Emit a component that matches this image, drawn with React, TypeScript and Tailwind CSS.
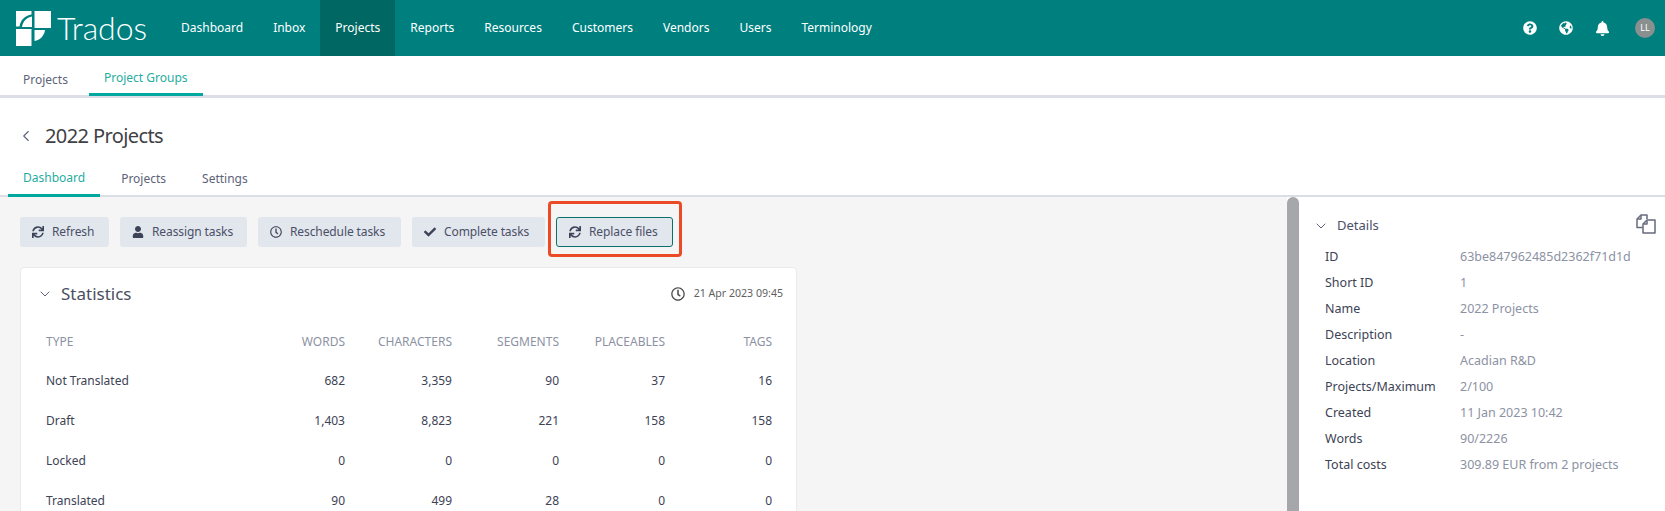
import { ChevronDown, ChevronLeft } from "lucide-react";
import { FaBell, FaCheck, FaGlobeAmericas, FaQuestionCircle, FaRegClock, FaSync, FaUser } from "react-icons/fa";

const navItems = ["Dashboard", "Inbox", "Projects", "Reports", "Resources", "Customers", "Vendors", "Users", "Terminology"];

const rows = [
  ["Not Translated", "682", "3,359", "90", "37", "16"],
  ["Draft", "1,403", "8,823", "221", "158", "158"],
  ["Locked", "0", "0", "0", "0", "0"],
  ["Translated", "90", "499", "28", "0", "0"],
];

const details = [
  ["ID", "63be847962485d2362f71d1d"],
  ["Short ID", "1"],
  ["Name", "2022 Projects"],
  ["Description", "-"],
  ["Location", "Acadian R&D"],
  ["Projects/Maximum", "2/100"],
  ["Created", "11 Jan 2023 10:42"],
  ["Words", "90/2226"],
  ["Total costs", "309.89 EUR from 2 projects"],
];

const Logo = () => (
  <svg width="35" height="35" viewBox="0 0 35 35" fill="#fff">
    <path d="M0 0h15.500v3.500C9 4.500 4.500 9 3.500 15.500H0z" />
    <path d="M6 16h10V5.500C10.500 6.500 7 10 6 16z" />
    <path d="M18.500 0H35v17H18.500z" />
    <path d="M0 18h15.500v17H0z" />
    <path d="M18.500 19H29c-.8 6-5 10-10.500 11z" />
  </svg>
);

const Action = ({ icon, label, w, active }: { icon: React.ReactNode; label: string; w: string; active?: boolean }) => (
  <button className={`${w} h-[30px] flex items-center pl-[11px] gap-[8px] rounded-[3px] bg-[#e2e6ed] text-[12px] tracking-[-0.1px] text-[#4a5068] ${active ? "border border-[#0b6f6b] pl-[10px]" : ""}`}>
    <span className="w-[13px] flex justify-center text-[#3c4359] text-[12px]">{icon}</span>
    {label}
  </button>
);

export default function App() {
  return (
    <div className="w-[1665px] h-[511px] overflow-hidden bg-white flex flex-col font-['Noto_Sans',sans-serif]">
      <header className="h-[56px] bg-[#007f7f] flex items-center shrink-0">
        <div className="flex items-center pl-[16px] w-[166px] gap-[6px]">
          <Logo />
          <span className="font-['Lato',sans-serif] font-light text-[32px] leading-none text-white">Trados</span>
        </div>
        <nav className="flex h-full text-[12px] text-white">
          {navItems.map((n) => (
            <a key={n} className={`h-full flex items-center px-[15px] ${n === "Projects" ? "bg-[#006763]" : ""}`}>{n}</a>
          ))}
        </nav>
        <div className="ml-auto flex items-center gap-[22px] pr-[10px] text-white text-[14px]">
          <FaQuestionCircle />
          <FaGlobeAmericas />
          <FaBell className="text-[15px]" />
          <div className="ml-[3px] w-[20px] h-[20px] rounded-full bg-[#8a8f8f] text-[9px] flex items-center justify-center">LL</div>
        </div>
      </header>

      <div className="h-[42px] shrink-0 border-b-[3px] border-[#dcdee6] flex text-[12px] px-[8px]">
        <a className="px-[15px] h-[40px] pt-[7px] flex items-center text-[#5d6479]">Projects</a>
        <a className="px-[15px] h-[40px] pt-[7px] flex items-center text-[#26ada0] border-b-[3px] border-[#00a89f] ml-[6px]">Project Groups</a>
      </div>

      <div className="h-[64px] shrink-0 flex items-center pl-[17px] gap-[10px] pt-[11px]">
        <ChevronLeft size={18} strokeWidth={1.5} className="text-[#5d6479]" />
        <h1 className="text-[20px] tracking-[-0.6px] text-[#3f3f46]">2022 Projects</h1>
      </div>

      <div className="h-[35px] shrink-0 border-b-[2px] border-[#dcdee6] flex text-[12px] px-[8px]">
        <a className="px-[15px] h-[35px] flex items-center text-[#26ada0] border-b-[3px] border-[#00a89f]">Dashboard</a>
        <a className="px-[15px] h-[33px] flex items-center text-[#5d6479] ml-[6px]">Projects</a>
        <a className="px-[15px] h-[33px] flex items-center text-[#5d6479] ml-[6px]">Settings</a>
      </div>

      <div className="flex flex-1 min-h-0">
        <main className="w-[1287px] bg-[#f5f5f5] px-[20px] pt-[20px]">
          <div className="flex items-center gap-[11px]">
            <Action icon={<FaSync />} label="Refresh" w="w-[89px]" />
            <Action icon={<FaUser />} label="Reassign tasks" w="w-[127px]" />
            <Action icon={<FaRegClock />} label="Reschedule tasks" w="w-[143px]" />
            <Action icon={<FaCheck />} label="Complete tasks" w="w-[133px]" />
            <div className="relative">
              <Action icon={<FaSync />} label="Replace files" w="w-[117px]" active />
              <div className="absolute -left-[8px] -right-[9px] -top-[16px] -bottom-[10px] border-[3px] border-[#ea4a26] rounded-[4px]" />
            </div>
          </div>

          <section className="w-[777px] mt-[20px] bg-white rounded-t-[4px] border border-[#e8eaee] pt-[15px]">
            <div className="flex items-center pl-[16px] pr-[13px] h-[22px]">
              <ChevronDown size={16} strokeWidth={1.5} className="text-[#5d6479]" />
              <span className="ml-[8px] text-[17px] text-[#4a4f60]">Statistics</span>
              <FaRegClock className="ml-auto text-[14px] text-[#4b4b4b]" />
              <span className="ml-[9px] text-[10.6px] text-[#5f5f5f]">21 Apr 2023 09:45</span>
            </div>
            <table className="w-[726px] ml-[25px] mt-[17px] text-[12px] text-[#3d4255]">
              <thead>
                <tr className="h-[39px] text-[#8c92a3] text-right">
                  <th className="font-normal text-left">TYPE</th>
                  <th className="font-normal w-[100px]">WORDS</th>
                  <th className="font-normal w-[107px]">CHARACTERS</th>
                  <th className="font-normal w-[107px]">SEGMENTS</th>
                  <th className="font-normal w-[106px]">PLACEABLES</th>
                  <th className="font-normal w-[107px]">TAGS</th>
                </tr>
              </thead>
              <tbody>
                {rows.map((r) => (
                  <tr key={r[0]} className="h-[40px] text-right">
                    <td className="text-left">{r[0]}</td>
                    {r.slice(1).map((c, i) => <td key={i}>{c}</td>)}
                  </tr>
                ))}
              </tbody>
            </table>
          </section>
        </main>

        <div className="w-[12px] bg-[#a5a7aa] rounded-t-[6px] shrink-0" />

        <aside className="flex-1 bg-white relative pt-[19px]">
          <div className="flex items-center pl-[14px] h-[20px]">
            <ChevronDown size={16} strokeWidth={1.5} className="text-[#5d6479]" />
            <span className="ml-[8px] text-[13px] text-[#4a4f6a]">Details</span>
            <svg className="absolute right-[9px] top-[17px]" width="20" height="20" viewBox="0 0 20 20" fill="none" stroke="#666b7e" strokeWidth="1.500" strokeLinejoin="round">
              <path d="M6.500 13.500H1V5l4-4h6v4" />
              <path d="M5 1.500V5H1.500" />
              <path d="M11 6h8v13H7v-9z" />
              <path d="M11 6.500V10H7.500" />
            </svg>
          </div>
          <dl className="mt-[8px] pl-[26px] text-[12.5px]">
            {details.map(([k, v]) => (
              <div key={k} className="flex h-[26px] items-center">
                <dt className="w-[135px] text-[#3d4255]">{k}</dt>
                <dd className="text-[#8c92a3]">{v}</dd>
              </div>
            ))}
          </dl>
        </aside>
      </div>
    </div>
  );
}
